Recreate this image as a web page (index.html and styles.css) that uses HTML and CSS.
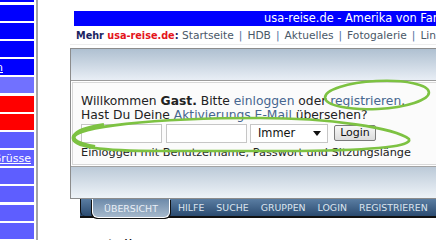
FILE: index.html
```html
<!DOCTYPE html>
<html lang="de">
<head>
  <meta charset="UTF-8">
  <meta name="viewport" content="width=device-width, initial-scale=1.0">
  <title>usa-reise.de - Forum</title>
  <link rel="stylesheet" href="styles.css">
</head>
<body>
  <ul class="sidebar">
    <li class="blue"></li>
    <li class="blue"></li>
    <li class="blue"></li>
    <li class="blue"></li>
    <li class="blue"><a href="#">Anmelden</a></li>
    <li class="pale"></li>
    <li class="red"></li>
    <li class="red"></li>
    <li class="soft"></li>
    <li class="soft"><a href="#" class="greet">Grüsse</a></li>
    <li class="soft"></li>
    <li class="soft"></li>
    <li class="soft"></li>
    <li class="soft"></li>
  </ul>

  <div class="main">
    <div class="titlebar">usa-reise.de - Amerika von Farmer bis Zuckerrohr</div>
    <div class="more">
      <b class="navy">Mehr</b> <b class="red-text">usa-reise.de</b><b class="navy">:</b>
      <a href="#">Startseite</a><span class="sep">|</span><a href="#">HDB</a><span class="sep">|</span><a href="#">Aktuelles</a><span class="sep">|</span><a href="#">Fotogalerie</a><span class="sep">|</span><a href="#">Links</a>
    </div>

    <div class="panel-wrap">
      <div class="panel">
        <div class="panel-head"></div>
        <div class="panel-body">
          <div class="login-box">
            <p class="welcome">Willkommen <b>Gast.</b> Bitte <a href="#">einloggen</a> oder <a href="#">registrieren</a>.<br>
            Hast Du Deine <a href="#">Aktivierungs E-Mail</a> übersehen?</p>
            <form class="login-row">
              <input type="text" class="field">
              <input type="password" class="field">
              <span class="select">Immer
                <svg width="8" height="5" viewBox="0 0 8 5"><path d="M0 0h8L4 5z" fill="#111"/></svg>
              </span>
              <button type="button" class="btn">Login</button>
            </form>
            <p class="hint">Einloggen mit Benutzername, Passwort und Sitzungslänge</p>
          </div>
        </div>
        <div class="panel-foot"></div>
      </div>
    </div>

    <div class="tabs">
      <span class="tab-edge"></span>
      <a href="#" class="tab active">ÜBERSICHT</a>
      <a href="#" class="tab">HILFE</a>
      <a href="#" class="tab">SUCHE</a>
      <a href="#" class="tab">GRUPPEN</a>
      <a href="#" class="tab">LOGIN</a>
      <a href="#" class="tab">REGISTRIEREN</a>
    </div>

    <h2 class="section">atoll</h2>
  </div>

  <!-- Markierungen über dem Screenshot -->
  <svg class="marks" viewBox="0 0 436 240">
    <ellipse cx="377" cy="95" rx="52" ry="14" transform="rotate(-3 377 95)" />
    <path d="M73 138 C75 127 150 118 260 118 C330 118 395 128 409 139 C412 146 380 150 300 151 L160 151 C100 151 72 147 73 138 Z" />
    <path class="thick" d="M95 147 C78 144 72 140 74 136 C78 130 90 127 104 125" />
  </svg>
</body>
</html>
```

FILE: styles.css
```css
body {
  margin: 0;
  height: 240px;
  overflow: hidden;
  display: flex;
  position: relative;
  font-family: "DejaVu Sans", Verdana, sans-serif;
  background: #fff;
}

a {
  text-decoration: none;
}

.sidebar {
  list-style: none;
  margin: -13.6px 2px 0 0;
  padding: 0;
  width: 34px;
  flex: none;
  display: flex;
  flex-direction: column;
  gap: 2.2px;
}

.sidebar li {
  height: 16px;
  flex: none;
  display: flex;
  justify-content: flex-end;
  align-items: center;
  overflow: hidden;
  font-size: 11px;
}
.sidebar li a {
  color: #fff;
  text-decoration: underline;
  white-space: nowrap;
  padding-right: 31px;
}
.sidebar li a.greet {
  padding-right: 3px;
}

.sidebar .blue { background: #0000ff; }
.sidebar .pale { background: #7171ff; }
.sidebar .red  { background: #ff0000; }
.sidebar .soft { background: #5e5eff; }

.main {
  flex: 1;
  min-width: 0;
  overflow: hidden;
  border-left: 2px solid #a6a6a6;
  padding: 11px 0 0 32px;
}

.titlebar {
  margin-left: 4px;
  height: 15px;
  line-height: 15px;
  padding-left: 190px;
  background: #0000ff;
  color: #fff;
  font-size: 11.4px;
  white-space: nowrap;
}

.more {
  margin: 3px 0 0 6px;
  font-size: 10.67px;
  line-height: 13px;
  white-space: nowrap;
  color: #4a5868;
}
.more b {
  font-size: 9.7px;
}
.more .navy { color: #1b2461; }
.more .red-text { color: #e4141b; }
.more a { color: #4a5868; }
.more .sep {
  color: #4f6fa0;
  margin: 0 5px;
}

.panel-wrap {
  margin-top: 2px;
  padding-top: 3px;
  border-top: 1px solid #ededed;
}

.panel {
  width: calc(100% + 20px);
  border: 1px solid #8c8c8c;
  border-right: none;
}

.panel-head {
  height: 31px;
  background: linear-gradient(#afc0d1, #e8eef5);
  border-bottom: 1px solid #9b9b9b;
}

.panel-body {
  padding: 1px;
  background: #fff;
}

.login-box {
  border: 1px solid #d8d8d8;
  background: #fbfbfb;
  padding: 11px 8px 4px;
  color: #222;
}

.welcome {
  margin: 0;
  font-size: 12.3px;
  line-height: 14px;
}
.welcome a { color: #46668f; }

.login-row {
  margin-top: 1px;
  height: 20px;
  display: flex;
  align-items: center;
}

.field {
  width: 81px;
  height: 19px;
  box-sizing: border-box;
  margin: 0 4px 0 0;
  border: 1px solid #c6c6c6;
  background: #fff;
  padding: 0;
}

.select {
  width: 78px;
  height: 19px;
  box-sizing: border-box;
  margin-left: -1px;
  border: 1px solid #c6c6c6;
  background: #fff;
  display: flex;
  align-items: center;
  justify-content: space-between;
  padding: 0 6px 0 7px;
  font-size: 11.4px;
  color: #111;
}

.btn {
  margin-left: 6px;
  width: 42px;
  height: 16px;
  padding: 0;
  border: 1px solid #7b7b7b;
  border-radius: 2px;
  background: linear-gradient(#f7f7f7, #dcdcdc);
  font-family: inherit;
  font-size: 11px;
  line-height: 14px;
  color: #111;
}

.hint {
  margin: 3px 0 0;
  font-size: 11.3px;
  line-height: 14px;
}

.panel-foot {
  height: 31px;
  border-top: 1px solid #a3a3a3;
  background: linear-gradient(#bccad8, #eef3f8);
}

.tabs {
  margin-left: 10px;
  height: 17px;
  display: flex;
  align-items: stretch;
  background: linear-gradient(#5a7da2, #2b4b70);
  border-bottom: 2px solid #111;
  font-size: 9.4px;
}

.tab-edge {
  width: 11px;
  border-left: 1px solid #111;
  border-bottom-left-radius: 5px;
}

.tab {
  display: flex;
  align-items: center;
  padding: 0 6px;
  color: #dce5ef;
  white-space: nowrap;
}
.tab.active {
  width: 78px;
  box-sizing: border-box;
  justify-content: center;
  padding: 0;
  margin-right: 2px;
  margin-bottom: -2px;
  background: linear-gradient(#6d8aaa, #a6b9cc);
  border: 1px solid #fff;
  border-top: none;
  border-radius: 0 0 6px 6px;
  box-shadow: -1px 1px 0 #111, 1px 1px 0 #111;
  color: #e9eff6;
}

.section {
  margin: 18px 0 0 28px;
  font-size: 16px;
  font-weight: normal;
  color: #111;
}

.marks {
  position: absolute;
  top: 0;
  left: 0;
  width: 436px;
  height: 240px;
  pointer-events: none;
}
.marks ellipse,
.marks path {
  fill: none;
  stroke: #7dc242;
  stroke-width: 2.6;
}
.marks path.thick {
  stroke-width: 4;
}
```
